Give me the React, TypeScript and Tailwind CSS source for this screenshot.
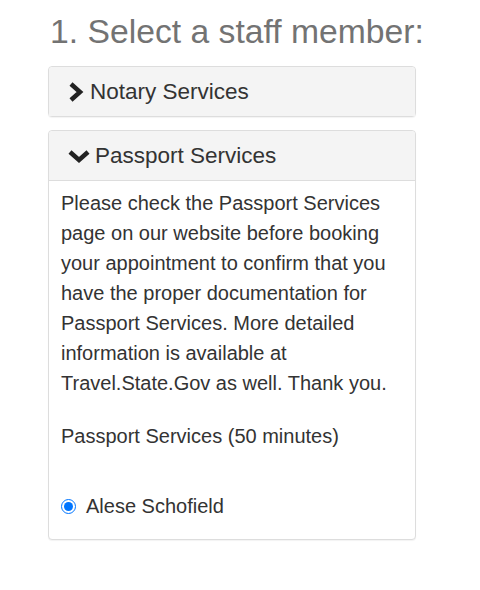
import React from "react";

const ChevronRight = () => (
  <svg width="16" height="22" viewBox="0 0 16 22" className="shrink-0" aria-hidden="true">
    <polyline points="3,3 12,11 3,19" fill="none" stroke="#222" strokeWidth="4.5" strokeLinejoin="miter" />
  </svg>
);

const ChevronDown = () => (
  <svg width="22" height="14" viewBox="0 0 22 14" className="shrink-0" aria-hidden="true">
    <polyline points="2,3 11,11 20,3" fill="none" stroke="#222" strokeWidth="4.5" strokeLinejoin="miter" />
  </svg>
);

export default function App() {
  return (
    <div className="min-h-[590px] bg-white font-['Liberation_Sans',Arial,sans-serif] text-[#333]">
      <div className="ml-[48px] w-[368px] pt-[11px]">
        <h1 className="ml-[2px] whitespace-nowrap text-[33.7px] leading-[40px] text-[#737373]">
          1. Select a staff member:
        </h1>

        <div className="mt-[15px] rounded border border-[#ddd] bg-white shadow-[0_1px_1px_rgba(0,0,0,0.05)]">
          <div className="flex h-[49px] items-center gap-[6px] rounded-t bg-[#f4f4f4] pl-[19px] text-[22.5px]">
            <ChevronRight />
            <span>Notary Services</span>
          </div>
        </div>

        <div className="mt-[13px] rounded border border-[#ddd] bg-white shadow-[0_1px_1px_rgba(0,0,0,0.05)]">
          <div className="flex h-[50px] items-center gap-[5px] rounded-t border-b border-[#ddd] bg-[#f4f4f4] pl-[19px] text-[22.5px]">
            <ChevronDown />
            <span>Passport Services</span>
          </div>
          <div className="px-[12px] pt-[7px] pb-[18px] text-[20px] leading-[30px]">
            <p>
              Please check the Passport Services page on our website before booking your appointment to
              confirm that you have the proper documentation for Passport Services. More detailed
              information is available at Travel.State.Gov as well. Thank you.
            </p>
            <p className="mt-[23px]">Passport Services (50 minutes)</p>
            <label className="mt-[40px] flex items-center gap-[10px]">
              <input
                type="radio"
                name="staff"
                defaultChecked
                className="m-0 h-[15px] w-[15px] accent-[#0075ff]"
              />
              <span>Alese Schofield</span>
            </label>
          </div>
        </div>
      </div>
    </div>
  );
}
